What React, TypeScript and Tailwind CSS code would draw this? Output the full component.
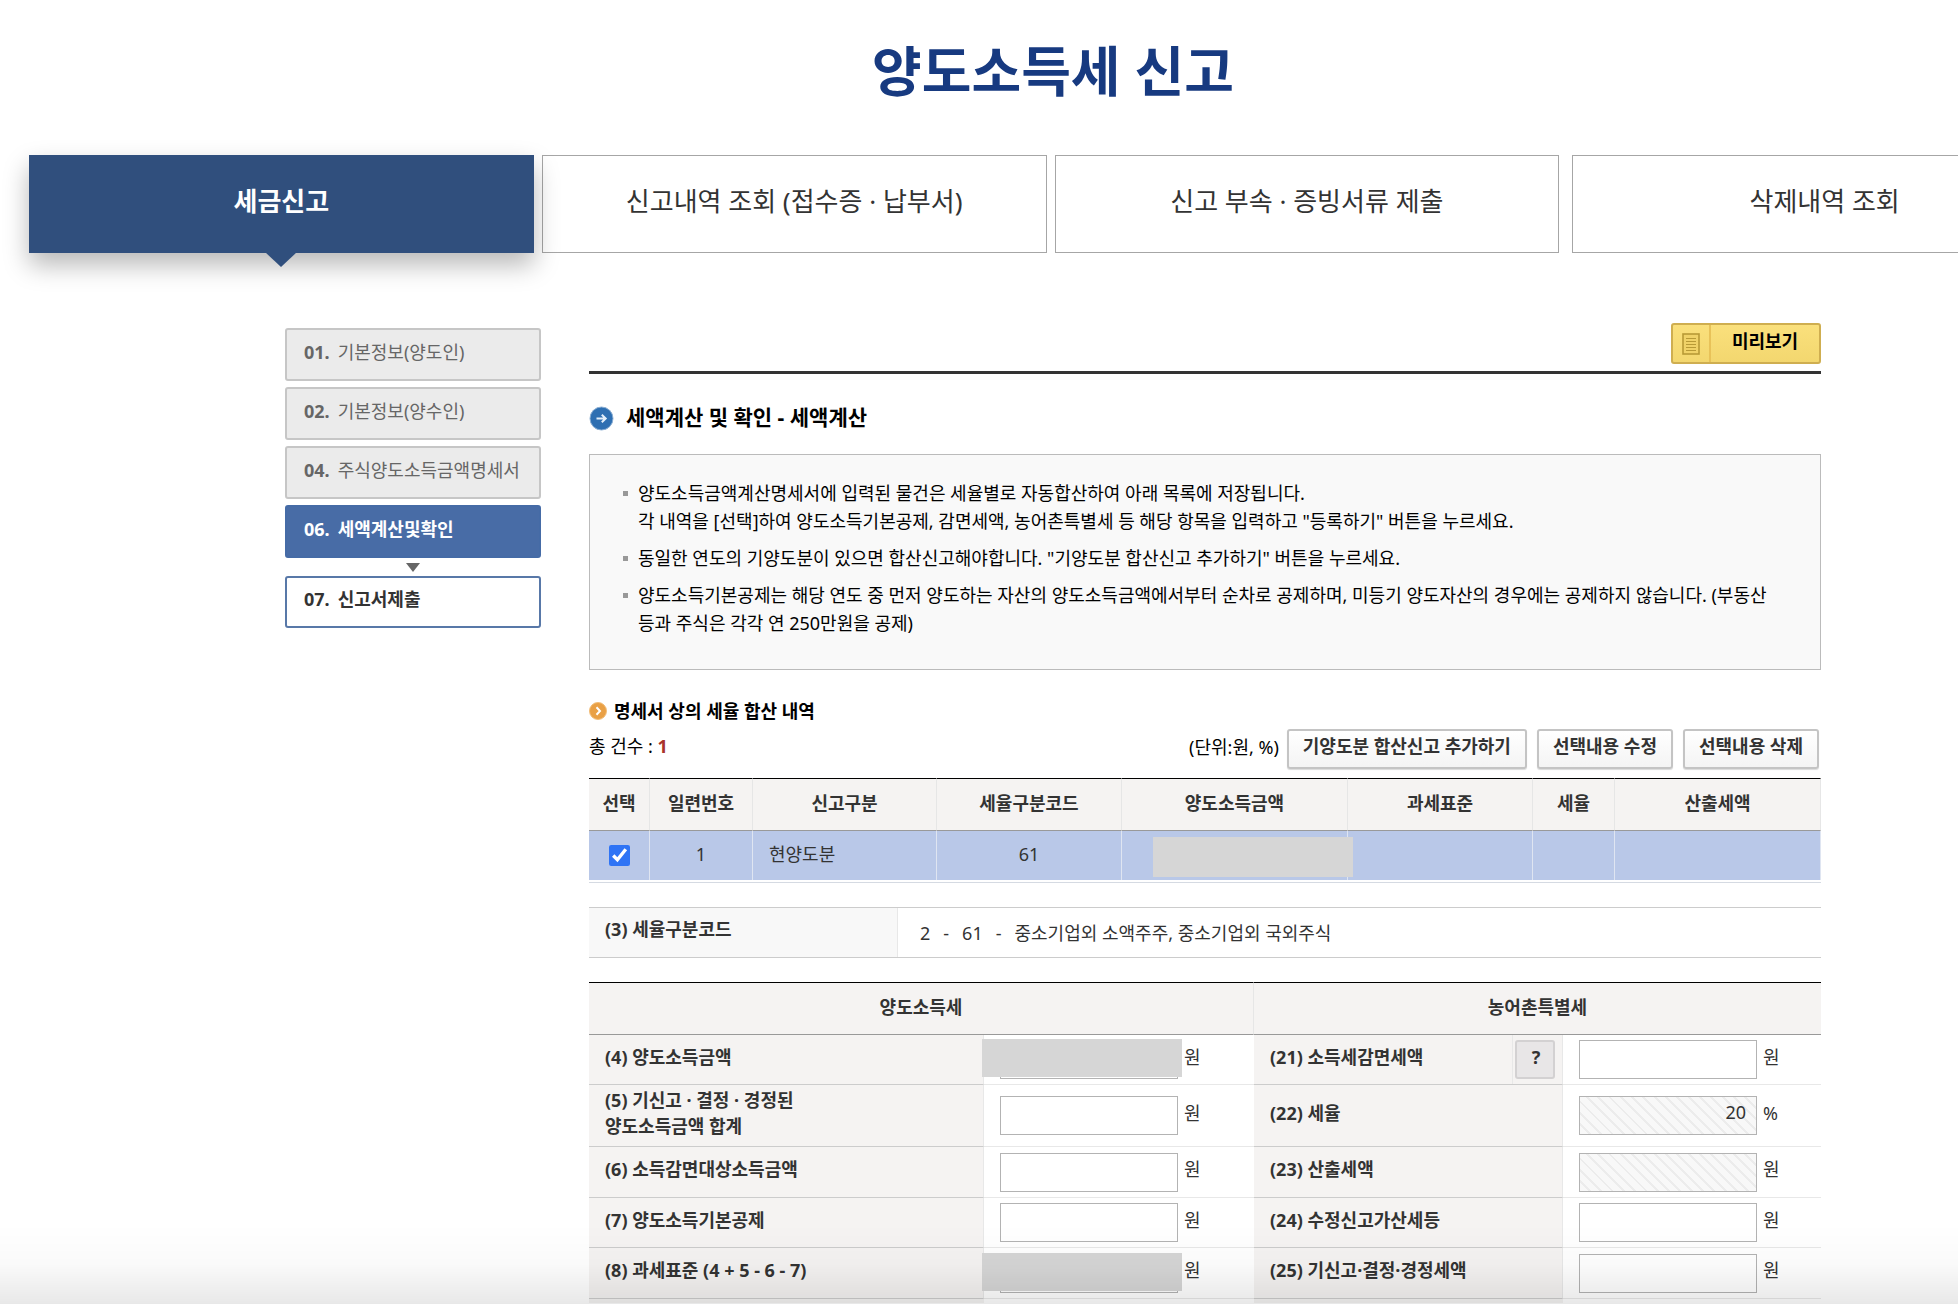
import React, { useState } from 'react';

type Field = {
  id: string;
  label: React.ReactNode;
  value?: string;
  unit: string;
  locked?: boolean;
  masked?: boolean;
  help?: boolean;
};

const tabs = ['세금신고', '신고내역 조회 (접수증 · 납부서)', '신고 부속 · 증빙서류 제출', '삭제내역 조회'];

const doneSteps = [
  { no: '01.', name: '기본정보(양도인)' },
  { no: '02.', name: '기본정보(양수인)' },
  { no: '04.', name: '주식양도소득금액명세서' }
];

const columns = [
  { name: '선택', width: 'w-[61px]' },
  { name: '일련번호', width: 'w-[103px]' },
  { name: '신고구분', width: 'w-[184px]' },
  { name: '세율구분코드', width: 'w-[185px]' },
  { name: '양도소득금액', width: 'w-[226px]' },
  { name: '과세표준', width: 'w-[185px]' },
  { name: '세율', width: 'w-[82px]' },
  { name: '산출세액', width: '' }
];

const rows: { height: string; left: Field; right: Field }[] = [
  {
    height: 'h-[50px]',
    left: { id: 'f4', label: '(4) 양도소득금액', unit: '원', masked: true },
    right: { id: 'f21', label: '(21) 소득세감면세액', unit: '원', help: true }
  },
  {
    height: 'h-[62px]',
    left: {
      id: 'f5',
      label: (
        <>
          (5) 기신고 · 결정 · 경정된
          <br />
          양도소득금액 합계
        </>
      ),
      unit: '원'
    },
    right: { id: 'f22', label: '(22) 세율', value: '20', unit: '%', locked: true }
  },
  {
    height: 'h-[51px]',
    left: { id: 'f6', label: '(6) 소득감면대상소득금액', unit: '원' },
    right: { id: 'f23', label: '(23) 산출세액', unit: '원', locked: true }
  },
  {
    height: 'h-[50px]',
    left: { id: 'f7', label: '(7) 양도소득기본공제', unit: '원' },
    right: { id: 'f24', label: '(24) 수정신고가산세등', unit: '원' }
  },
  {
    height: 'h-[51px]',
    left: { id: 'f8', label: '(8) 과세표준 (4 + 5 - 6 - 7)', unit: '원', masked: true },
    right: { id: 'f25', label: '(25) 기신고·결정·경정세액', unit: '원' }
  }
];

const FieldCells: React.FC<{ field: Field }> = ({ field }) => {
  const [value, setValue] = useState(field.value || '');

  return (
    <>
      <th
        scope="row"
        className="border-r border-b border-r-[#e8e8e8] border-b-[#ccc] bg-[#f5f3f2] p-0 text-left font-bold"
      >
        <div className="flex items-center justify-between">
          <label htmlFor={field.id} className="pb-[6px] pl-4 leading-[26px]">
            {field.label}
          </label>
          {field.help && (
            <div className="flex h-[49px] items-center border-l border-[#e8e8e8] pr-[7px] pl-[2px]">
              <button
                type="button"
                className="h-[39px] w-10 rounded-[3px] border-2 border-[#d3d1d2] bg-[#e8e6e7] pb-[6px] pl-[2px] font-bold"
              >
                ?
              </button>
            </div>
          )}
        </div>
      </th>
      <td className="border-b border-[#e8e8e8] p-0">
        <div className="flex items-center pl-4">
          <div className="relative">
            <input
              id={field.id}
              type="text"
              value={value}
              readOnly={field.locked}
              onChange={(e) => setValue(e.target.value)}
              className={
                field.locked
                  ? 'block h-[39px] w-[178px] border border-[#b3b3b3] bg-[#f8f8f8] bg-[repeating-linear-gradient(45deg,transparent_0px,transparent_6px,#ececec_6px,#ececec_8px)] pr-2.5 pb-2 text-right'
                  : 'block h-[39px] w-[178px] border border-[#b3b3b3] bg-white pr-2.5 pb-2 text-right'
              }
            />
            {field.masked && <span className="absolute -top-px -left-[18px] h-[38px] w-[200px] bg-[#d6d6d6]" />}
          </div>
          <span className="pb-[6px] pl-[6px]">{field.unit}</span>
        </div>
      </td>
    </>
  );
};

const Bullet: React.FC<{ children: React.ReactNode }> = ({ children }) => (
  <li className="flex gap-2.5">
    <span className="mt-3 ml-px h-[5px] w-[5px] shrink-0 bg-[#999]" />
    <span className="break-keep">{children}</span>
  </li>
);

const actionClass =
  'h-10 rounded-[3px] border-2 border-[#c4c4c4] bg-gradient-to-b from-white to-[#f4f4f4] px-[14px] pb-[6px] font-bold whitespace-nowrap text-[#333] shadow-[0_1px_1px_rgba(0,0,0,0.15)]';

const App: React.FC = () => {
  const [activeTab, setActiveTab] = useState(0);
  const [checked, setChecked] = useState(true);

  return (
    <div className="min-h-screen overflow-hidden bg-white font-['Noto_Sans','Noto_Sans_CJK_KR',sans-serif] text-[18px] leading-7 text-[#333]">
      <div className="min-w-[2106px]">
        <h1 className="flex h-[155px] items-center justify-center pb-[14px] text-[54px] leading-[64px] font-bold text-[#173a80]">
          양도소득세 신고
        </h1>

        <nav className="flex gap-2 px-[29px]">
          {tabs.map((tab, index) => (
            <button
              key={tab}
              type="button"
              onClick={() => setActiveTab(index)}
              className={
                index === activeTab
                  ? 'relative h-[98px] flex-1 border border-[#304f7d] bg-[#304f7d] pb-1.5 text-[26px] leading-9 font-bold text-white shadow-[0_12px_24px_rgba(0,0,0,0.28)]'
                  : 'h-[98px] flex-1 border border-[#a6a6a6] bg-white pb-1.5 text-[26px] leading-9 last:ml-[5px]'
              }
            >
              {tab}
              {index === activeTab && (
                <svg className="absolute top-full left-1/2 -ml-4" width="32" height="15" viewBox="0 0 32 15">
                  <path d="M0 0h32L16 15z" fill="#304f7d" />
                </svg>
              )}
            </button>
          ))}
        </nav>

        <div className="mx-auto flex max-w-[1536px] gap-12 pt-[70px]">
          <aside className="w-64 shrink-0 pt-[5px]">
            <ol className="flex flex-col gap-[6px]">
              {doneSteps.map((step) => (
                <li key={step.no}>
                  <a
                    href="#"
                    className="flex h-[53px] items-center gap-2 rounded-[3px] border-2 border-[#c6c6c6] bg-[#ebebeb] pb-[6px] pl-[17px] whitespace-nowrap text-[#666]"
                  >
                    <b>{step.no}</b>
                    {step.name}
                  </a>
                </li>
              ))}
              <li>
                <a
                  href="#"
                  className="flex h-[53px] items-center gap-2 rounded-[3px] border-2 border-[#456ba6] bg-[#486ca6] pb-[6px] pl-[17px] font-bold text-white"
                >
                  <span>06.</span>
                  세액계산및확인
                </a>
              </li>
            </ol>
            <svg className="mx-auto mt-[5px] mb-1 block" width="14" height="9" viewBox="0 0 14 9">
              <path d="M0 0h14L7 9z" fill="#666" />
            </svg>
            <a
              href="#"
              className="flex h-[52px] items-center gap-2 rounded-[3px] border-2 border-[#5878a8] bg-white pb-[6px] pl-[17px] font-bold"
            >
              <span>07.</span>
              신고서제출
            </a>
          </aside>

          <main className="min-w-0 flex-1">
            <div className="flex h-[51px] items-start justify-end border-b-[3px] border-[#333]">
              <button
                type="button"
                className="flex h-[41px] w-[150px] rounded-[3px] border-2 border-[#cfae50] bg-gradient-to-b from-[#fae07c] to-[#f3d76f] font-bold text-black"
              >
                <span className="flex h-full w-[38px] items-center justify-center border-r-2 border-[#e8c259]">
                  <svg width="18" height="22" viewBox="0 0 18 22">
                    <rect x="1" y="1" width="16" height="20" fill="#f0d268" stroke="#b89a36" strokeWidth="1.6" />
                    <path d="M4 5.500h10M4 8.500h10M4 11.500h10M4 14.500h10M4 17.500h10" stroke="#b89a36" strokeWidth="1.200" />
                  </svg>
                </span>
                <span className="flex-1 pt-[2px]">미리보기</span>
              </button>
            </div>

            <h2 className="mt-8 mb-6 flex h-6 items-center gap-3 text-[21px] font-bold text-black">
              <svg width="25" height="25" viewBox="0 0 25 25">
                <circle cx="12.500" cy="12.500" r="11.500" fill="#2e6fb2" stroke="#8db0d4" />
                <path d="M7.500 12.500h9M12.800 8.700l3.900 3.800-3.900 3.800" fill="none" stroke="#e3effa" strokeWidth="2" />
              </svg>
              <span className="pb-[3px]">세액계산 및 확인 - 세액계산</span>
            </h2>

            <ul className="flex flex-col gap-[9px] border border-[#bbb] bg-[#f9f9f9] pt-6 pr-8 pb-8 pl-8 text-black">
              <Bullet>
                양도소득금액계산명세서에 입력된 물건은 세율별로 자동합산하여 아래 목록에 저장됩니다.
                <br />각 내역을 [선택]하여 양도소득기본공제, 감면세액, 농어촌특별세 등 해당 항목을 입력하고 "등록하기" 버튼을
                누르세요.
              </Bullet>
              <Bullet>동일한 연도의 기양도분이 있으면 합산신고해야합니다. "기양도분 합산신고 추가하기" 버튼을 누르세요.</Bullet>
              <Bullet>
                양도소득기본공제는 해당 연도 중 먼저 양도하는 자산의 양도소득금액에서부터 순차로 공제하며, 미등기 양도자산의
                경우에는 공제하지 않습니다. (부동산 등과 주식은 각각 연 250만원을 공제)
              </Bullet>
            </ul>

            <h3 className="mt-8 flex h-[18px] items-center gap-[7px] font-bold text-black">
              <svg width="18" height="18" viewBox="0 0 18 18">
                <circle cx="9" cy="9" r="8.500" fill="#e9a045" stroke="#f2bd78" />
                <path d="M7.500 5.300L11 9l-3.500 3.700" fill="none" stroke="#fff" strokeWidth="2" />
              </svg>
              명세서 상의 세율 합산 내역
            </h3>

            <div className="mt-[9px] flex h-10 items-center gap-2.5 pr-[2px]">
              <p className="flex-1 pb-[6px] text-black">
                총 건수 : <b className="text-[#a8332c]">1</b>
              </p>
              <span className="-mr-[2px] pb-1 text-black">(단위:원, %)</span>
              <button type="button" className={actionClass}>
                기양도분 합산신고 추가하기
              </button>
              <button type="button" className={actionClass}>
                선택내용 수정
              </button>
              <button type="button" className={actionClass}>
                선택내용 삭제
              </button>
            </div>

            <div className="mt-[9px] border-b border-[#d5dae2] pb-[2px]">
              <table className="w-full table-fixed border-separate border-spacing-0">
                <thead>
                  <tr className="h-[53px] bg-[#f5f3f2]">
                    {columns.map((col) => (
                      <th
                        key={col.name}
                        scope="col"
                        className={`border-t border-r border-b border-t-black border-r-[#e6e6e6] border-b-[#999] px-0 pt-0 pb-1 font-bold ${col.width}`}
                      >
                        {col.name}
                      </th>
                    ))}
                  </tr>
                </thead>
                <tbody>
                  <tr className="h-[49px] bg-[#b9c8e8] text-center [&>td]:border-r [&>td]:border-[#dfe5f1] [&>td]:px-0 [&>td]:pt-0 [&>td]:pb-1">
                    <td>
                      <input
                        type="checkbox"
                        aria-label="선택"
                        checked={checked}
                        onChange={(e) => setChecked(e.target.checked)}
                        className="mx-auto mt-1 block h-[21px] w-[21px] accent-[#2f74f5]"
                      />
                    </td>
                    <td>1</td>
                    <td className="text-left">
                      <span className="pl-4">현양도분</span>
                    </td>
                    <td>61</td>
                    <td className="relative">
                      <span className="absolute top-[6px] left-[31px] z-10 h-10 w-[200px] bg-[#d6d6d6]" />
                    </td>
                    <td />
                    <td />
                    <td />
                  </tr>
                </tbody>
              </table>
            </div>

            <dl className="mt-6 flex h-[51px] border-y border-[#ccc]">
              <dt className="flex w-[309px] items-center border-r border-[#e8e8e8] bg-[#f8f8f8] pb-2 pl-4 font-bold">
                (3) 세율구분코드
              </dt>
              <dd className="flex flex-1 items-center gap-[13px] pl-[22px]">
                <span>2</span>
                <span>-</span>
                <span>61</span>
                <span>-</span>
                <span>중소기업외 소액주주, 중소기업외 국외주식</span>
              </dd>
            </dl>

            <table className="mt-6 w-full table-fixed border-separate border-spacing-0">
              <colgroup>
                <col className="w-[395px]" />
                <col className="w-[270px]" />
                <col className="w-[309px]" />
                <col />
              </colgroup>
              <thead>
                <tr className="h-[53px] bg-[#f5f3f2]">
                  <th
                    colSpan={2}
                    className="border-t border-r border-b border-t-black border-r-[#e6e6e6] border-b-[#999] px-0 pt-0 pb-1 font-bold"
                  >
                    양도소득세
                  </th>
                  <th colSpan={2} className="border-t border-b border-t-black border-b-[#999] px-0 pt-0 pb-1 font-bold">
                    농어촌특별세
                  </th>
                </tr>
              </thead>
              <tbody>
                {rows.map((row) => (
                  <tr key={row.left.id} className={row.height}>
                    <FieldCells field={row.left} />
                    <FieldCells field={row.right} />
                  </tr>
                ))}
                <tr className="h-1">
                  <td className="bg-[#f5f3f2] p-0" />
                  <td className="p-0" />
                  <td className="bg-[#f5f3f2] p-0" />
                  <td className="p-0" />
                </tr>
              </tbody>
            </table>
          </main>
        </div>
      </div>

      <div className="pointer-events-none fixed inset-x-0 bottom-0 z-20 h-20 bg-gradient-to-t from-black/9 via-black/2 to-transparent" />
    </div>
  );
};

export default App;
